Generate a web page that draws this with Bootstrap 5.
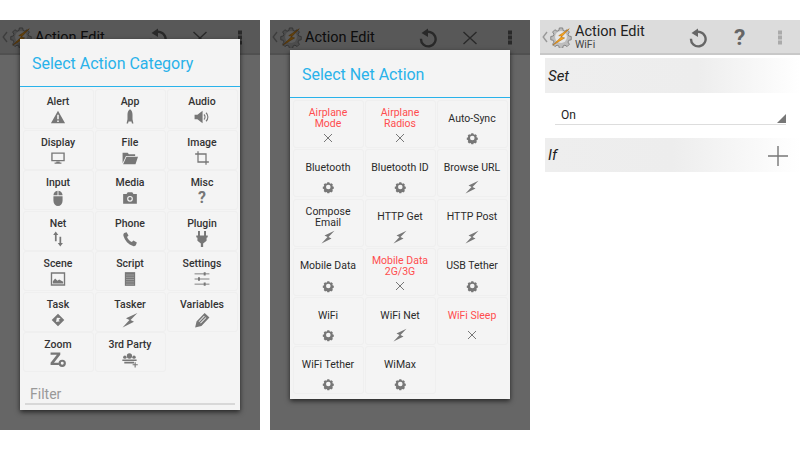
<!DOCTYPE html>
<html lang="en">
<head>
<meta charset="utf-8">
<title>Tasker Action Edit</title>
<link href="https://cdn.jsdelivr.net/npm/bootstrap@5.3.0/dist/css/bootstrap.min.css" rel="stylesheet">
<style>
html,body{background:#fff;margin:0;width:800px;height:450px;overflow:hidden}
body{font-family:Roboto,"Liberation Sans",sans-serif;color:#222}
.stage{padding-top:20px;gap:10px;height:450px}
.phone{width:260px;height:410px;background:#fff;overflow:hidden}
.appbar{height:35px;background:#dcdcdc;border-bottom:2px solid #c8c8c8;padding-left:2px}
.appbar .chev{width:6px;height:12px;margin-right:2px;flex:none}
.appbar .logo{width:22px;height:22px;flex:none}
.apptitle{margin-left:3px;line-height:1;flex:1;padding-top:3px}
.apptitle.two{padding-top:2px}
.apptitle b{display:block;font-weight:400;font-size:14.5px;color:#222}
.apptitle span{display:block;font-size:10.5px;color:#444;margin-top:1px}
.barico{position:absolute;top:8px;color:#666}
.barico svg{display:block;width:20px;height:20px}
.scrim{position:absolute;inset:0;background:rgba(0,0,0,.6)}
.dlg{position:absolute;left:20px;width:220px;background:#f4f4f4;box-shadow:0 2px 5px rgba(0,0,0,.65)}
.dlg1{top:19px;height:371px}
.dlg2{top:30px;height:349px}
.dlgtitle{color:#29b2ea;font-size:16px;height:48px;line-height:50px;padding-left:12px;border-bottom:1.5px solid #29b2ea;letter-spacing:-.03px}
.tiles{display:grid;grid-template-columns:repeat(3,71px);column-gap:1px;padding:2px 2px 0;justify-content:center}
.dlg1 .tiles{grid-auto-rows:40px;row-gap:.5px}
.dlg2 .tiles{grid-auto-rows:48px;row-gap:1.3px}
.tile{border:1px solid #efefef;border-radius:3px;text-align:center;align-items:center}
.dlg1 .tile{font-size:10.5px;font-weight:500;color:#333}
.dlg1 .tlabel{height:13px;line-height:13px;margin-top:5px}
.dlg1 .tico{margin-top:1px;width:16px;height:16px}
.dlg1 .tico svg{width:16px;height:16px}
.dlg2 .tile{font-size:10.5px;color:#2b2b2b}
.dlg2 .tlabel{height:30px;line-height:11px;padding-top:4px;justify-content:center;align-items:center}
.tile.off{color:#ff4d4f!important}
.tico{width:14px;height:14px;color:#777;flex:none}
.tico svg{display:block;width:14px;height:14px}
.filterbox{position:absolute;left:5px;right:5px;bottom:5px;height:24px;border-bottom:2px solid #d8d8d8;padding-left:5px;font-size:14px;line-height:26px;color:#999}
.band{height:35px;margin-left:5px;font-style:italic;font-size:15px;padding-left:3px;color:#222}
.setband{margin-top:3px;padding-top:1px;background:linear-gradient(90deg,#eeeeee,#ededed 60%,#fff)}
.ifband{margin-top:13px;height:34px;padding-top:1px;background:linear-gradient(90deg,#eeeeee,#ededed 50%,#fff)}
.picker{margin:15px 14px 0 15px;height:17px;border-bottom:1.5px solid #ddd;font-size:12px;line-height:15px;padding-left:6px;color:#222}
.caret{position:absolute;right:0;bottom:1px;width:9px;height:9px}
.plus{width:20px;height:20px;margin-right:12px;color:#777}
</style>
</head>
<body>
<svg width="0" height="0" class="position-absolute">
<defs>
<symbol id="logo" viewBox="0 0 24 24">
<path fill="#bdbdbd" stroke="#777" stroke-width="1" d="M10 1h4l.6 3 2.2.9 2.6-1.7 2.800 2.800-1.700 2.600.9 2.200 3 .6v4l-3 .6-.9 2.200 1.700 2.600-2.800 2.800-2.600-1.700-2.200.9-.6 3h-4l-.6-3-2.200-.9-2.600 1.700-2.800-2.800 1.700-2.600-.9-2.200-3-.6v-4l3-.6.9-2.200-1.700-2.600 2.800-2.800 2.600 1.700 2.200-.9z" transform="translate(1.200 1.200) scale(.9)"/>
<circle cx="12" cy="12" r="6.500" fill="#e6e6e6"/>
<path fill="#f5a21c" stroke="#a85f00" stroke-width=".5" d="M21 3 9.500 10.500l3.500.8L3 21l13-8-3.500-1z"/>
</symbol>
<symbol id="chev" viewBox="0 0 6 12"><path d="M5 1 1.200 6 5 11" fill="none" stroke="#999" stroke-width="1.400"/></symbol>
<symbol id="undo" viewBox="0 0 20 20"><path d="M6 5.200A7.300 7.300 0 1 1 3 10.800" fill="none" stroke="currentColor" stroke-width="2.400"/><path d="M10 .5v8.400L3.500 5z" fill="currentColor"/></symbol>
<symbol id="xmk" viewBox="0 0 20 20"><path d="M3.500 4l13 12M16.500 4l-13 12" fill="none" stroke="currentColor" stroke-width="1.400"/></symbol>
<symbol id="dots" viewBox="0 0 20 20"><path d="M8 2.500h4v4H8zM8 7.500h4v4H8zM8 12.500h4v4H8z" fill="currentColor" stroke="none"/></symbol>
<symbol id="gear" viewBox="0 0 14 14"><path fill-rule="evenodd" fill="currentColor" d="M6 2.500h2l.3 1 .9.400 1-.5 1.400 1.400-.5 1 .4.900 1 .3v2l-1 .3-.4.900.5 1-1.400 1.400-1-.5-.9.400-.3 1H6l-.3-1-.9-.4-1 .5-1.400-1.400.5-1-.4-.9-1-.3v-2l1-.3.4-.9-.5-1 1.400-1.400 1 .5.900-.4zM7 4.900a2.300 2.300 0 1 0 0 4.600 2.300 2.300 0 0 0 0-4.600z" transform="translate(.3 -.2)"/></symbol>
<symbol id="bolt" viewBox="0 0 14 14"><path fill="currentColor" d="M13.500.8 3.500 5.500l3 1.500L.5 13.500 10.500 8.500l-3-1.500z"/></symbol>
<symbol id="ex" viewBox="0 0 14 14"><path d="M3 3l8 8M11 3l-8 8" fill="none" stroke="currentColor" stroke-width="1"/></symbol>
<symbol id="warn" viewBox="0 0 14 14"><path fill-rule="evenodd" fill="currentColor" d="M7 1.500 13.200 12.500H.8zM6.300 5v4h1.400V5zM6.300 10v1.300h1.400V10z"/></symbol>
<symbol id="rocket" viewBox="0 0 14 14"><path fill="currentColor" d="M7 .3c1.600 1 2.200 2.700 2.200 4.700v4l.8 3.700H8.700L8.300 11H5.700l-.4 1.700H4l.8-3.700V5C4.800 3 5.400 1.300 7 .3z"/></symbol>
<symbol id="speaker" viewBox="0 0 14 14"><path fill="currentColor" d="M.5 5h2.500L7.500 1.500v11L3 9H.5z"/><path fill="none" stroke="currentColor" d="M8.700 4.800a3 3 0 0 1 0 4.400M10.500 3.300a5 5 0 0 1 0 7.400"/></symbol>
<symbol id="monitor" viewBox="0 0 14 14"><path fill="none" stroke="currentColor" stroke-width="1.200" d="M1.700 2.700h10.600v6.600H1.700z"/><path fill="currentColor" d="M5.500 10h3v1h1.500v1H4v-1h1.500z"/></symbol>
<symbol id="folder" viewBox="0 0 14 14"><path fill="currentColor" d="M.5 2.500h4.500l1 1.200h5.500v1.500H3.500L.5 11.500zM3.900 6H14L11.800 12.500H1z"/></symbol>
<symbol id="crop" viewBox="0 0 14 14"><path fill="none" stroke="currentColor" stroke-width="1.100" d="M3.500 1v9.500H13M1 3.500h9.500V13"/></symbol>
<symbol id="mouse" viewBox="0 0 14 14"><path fill="currentColor" d="M3 5.500h8V9.500a4 4.500 0 0 1-8 0zM3 4.700C3 2.500 4.500.8 6.600.6v4.100zM7.400.6C9.500.8 11 2.500 11 4.700H7.400z"/></symbol>
<symbol id="camera" viewBox="0 0 14 14"><path fill-rule="evenodd" fill="currentColor" d="M1 3.500h3L5 2h4l1 1.500h3V12H1zM7 5.200a2.500 2.500 0 1 0 0 5 2.500 2.500 0 0 0 0-5z"/><circle cx="7" cy="7.700" r="1.500" fill="currentColor"/></symbol>
<symbol id="arrows" viewBox="0 0 14 14"><path fill="currentColor" d="M5 .5 7.300 3.500H5.800V9H4.300V3.500H2.800zM9 13.500 6.800 10.500h1.500V5h1.500v5.500h1.500z"/></symbol>
<symbol id="phone" viewBox="0 0 14 14"><path fill="currentColor" d="M2 1.800 4 1l1.700 3-1.300 1.200c.6 1.600 2.500 3.700 4.200 4.400L10 8.300l3 1.800-.8 2.200c-.4.900-1.500 1.200-2.500.8C5.500 11.500 2.500 8.500 1.300 4.300c-.3-1 0-2 .7-2.500z"/></symbol>
<symbol id="plug" viewBox="0 0 14 14"><path fill="currentColor" d="M3.500 0h1.700v4h3.600V0h1.700v4H12v1.500l-1 .5v2.500L8 11v3H6v-3L3 8.500V6L2 5.500V4h1.500z"/></symbol>
<symbol id="picture" viewBox="0 0 14 14"><path fill="none" stroke="currentColor" stroke-width="1.200" d="M1.300 1.800h11.400v10.400H1.300z"/><path fill="currentColor" d="M2.500 11V9l2-2.500 2 2 1.500-1 3.500 2V11z"/></symbol>
<symbol id="script" viewBox="0 0 14 14"><path fill="currentColor" d="M2.500 1h9v12h-9z"/><path stroke="#bbb" stroke-width=".5" d="M3.500 3.500h7M3.500 5.500h7M3.500 7.500h7M3.500 9.500h7M3.500 11.500h7"/></symbol>
<symbol id="sliders" viewBox="0 0 14 14"><path stroke="currentColor" stroke-width=".8" d="M.5 2.500h13M.5 7h13M.5 11.500h13"/><path fill="currentColor" d="M8.500 1h1.700v3H8.500zM3.500 5.500h1.700v3H3.500zM8.500 10h1.700v3H8.500z"/></symbol>
<symbol id="diamond" viewBox="0 0 14 14"><path fill-rule="evenodd" fill="currentColor" d="M7 1.500 12.500 7 7 12.500 1.500 7zM6 5 5.300 8.700 8.700 8 7.500 7 9.300 5.300z"/></symbol>
<symbol id="pencil" viewBox="0 0 14 14"><path fill="currentColor" d="M9.300.8 13.500 4.800l-7 7.400L1 13.500l1.200-5.200zM8.800 3.300 4 8.300l.5.500 4.900-5zM10.300 4.500l-4.900 5 .5.500 4.900-5z"/></symbol>
<symbol id="zgear" viewBox="0 0 14 14"><path fill="currentColor" d="M.5.500h8.500v1.900L3.500 9.300H7.800v2H.5V9.400L6 2.500H.5z"/><path fill-rule="evenodd" fill="currentColor" d="M10.700 6.700a3.200 3.200 0 1 0 0 6.400 3.200 3.200 0 0 0 0-6.400zm0 1.900a1.300 1.300 0 1 1 0 2.600 1.300 1.300 0 0 1 0-2.600z"/></symbol>
<symbol id="people" viewBox="0 0 14 14"><circle cx="6.500" cy="3.500" r="2.300" fill="currentColor"/><circle cx="2.500" cy="4.500" r="1.500" fill="currentColor"/><circle cx="10.500" cy="4.500" r="1.500" fill="currentColor"/><path fill="currentColor" d="M.3 6.500h12.500v1.300H.3zM2 8.500h8.500v1.500H2z"/><path stroke="currentColor" d="M11.500 9v4.500M9.300 11.200h4.500"/></symbol>
<symbol id="plusm" viewBox="0 0 20 20"><path d="M10 0v20M0 10h20" stroke="currentColor" stroke-width="1.400" fill="none"/></symbol>
</defs>
</svg>

<div class="stage d-flex">

  <div class="phone position-relative">
    <div class="appbar d-flex align-items-center">
      <svg class="chev"><use href="#chev"/></svg><svg class="logo"><use href="#logo"/></svg>
      <div class="apptitle"><b>Action Edit</b></div>
      <span class="barico" style="left:148px"><svg><use href="#undo"/></svg></span>
      <span class="barico" style="left:190px"><svg><use href="#xmk"/></svg></span>
      <span class="barico" style="left:230px"><svg><use href="#dots"/></svg></span>
    </div>
    <div class="scrim"></div>
    <div class="dlg dlg1">
      <div class="dlgtitle">Select Action Category</div>
      <div class="tiles">
        <div class="tile d-flex flex-column"><div class="tlabel">Alert</div><div class="tico"><svg><use href="#warn"/></svg></div></div>
        <div class="tile d-flex flex-column"><div class="tlabel">App</div><div class="tico"><svg><use href="#rocket"/></svg></div></div>
        <div class="tile d-flex flex-column"><div class="tlabel">Audio</div><div class="tico"><svg><use href="#speaker"/></svg></div></div>
        <div class="tile d-flex flex-column"><div class="tlabel">Display</div><div class="tico"><svg><use href="#monitor"/></svg></div></div>
        <div class="tile d-flex flex-column"><div class="tlabel">File</div><div class="tico"><svg><use href="#folder"/></svg></div></div>
        <div class="tile d-flex flex-column"><div class="tlabel">Image</div><div class="tico"><svg><use href="#crop"/></svg></div></div>
        <div class="tile d-flex flex-column"><div class="tlabel">Input</div><div class="tico"><svg><use href="#mouse"/></svg></div></div>
        <div class="tile d-flex flex-column"><div class="tlabel">Media</div><div class="tico"><svg><use href="#camera"/></svg></div></div>
        <div class="tile d-flex flex-column"><div class="tlabel">Misc</div><div class="tico fw-bold lh-1 fs-6 text-center">?</div></div>
        <div class="tile d-flex flex-column"><div class="tlabel">Net</div><div class="tico"><svg><use href="#arrows"/></svg></div></div>
        <div class="tile d-flex flex-column"><div class="tlabel">Phone</div><div class="tico"><svg><use href="#phone"/></svg></div></div>
        <div class="tile d-flex flex-column"><div class="tlabel">Plugin</div><div class="tico"><svg><use href="#plug"/></svg></div></div>
        <div class="tile d-flex flex-column"><div class="tlabel">Scene</div><div class="tico"><svg><use href="#picture"/></svg></div></div>
        <div class="tile d-flex flex-column"><div class="tlabel">Script</div><div class="tico"><svg><use href="#script"/></svg></div></div>
        <div class="tile d-flex flex-column"><div class="tlabel">Settings</div><div class="tico"><svg><use href="#sliders"/></svg></div></div>
        <div class="tile d-flex flex-column"><div class="tlabel">Task</div><div class="tico"><svg><use href="#diamond"/></svg></div></div>
        <div class="tile d-flex flex-column"><div class="tlabel">Tasker</div><div class="tico"><svg><use href="#bolt"/></svg></div></div>
        <div class="tile d-flex flex-column"><div class="tlabel">Variables</div><div class="tico"><svg><use href="#pencil"/></svg></div></div>
        <div class="tile d-flex flex-column"><div class="tlabel">Zoom</div><div class="tico"><svg><use href="#zgear"/></svg></div></div>
        <div class="tile d-flex flex-column"><div class="tlabel">3rd Party</div><div class="tico"><svg><use href="#people"/></svg></div></div>
      </div>
      <div class="filterbox">Filter</div>
    </div>
  </div>

  <div class="phone position-relative">
    <div class="appbar d-flex align-items-center">
      <svg class="chev"><use href="#chev"/></svg><svg class="logo"><use href="#logo"/></svg>
      <div class="apptitle"><b>Action Edit</b></div>
      <span class="barico" style="left:148px"><svg><use href="#undo"/></svg></span>
      <span class="barico" style="left:190px"><svg><use href="#xmk"/></svg></span>
      <span class="barico" style="left:230px"><svg><use href="#dots"/></svg></span>
    </div>
    <div class="scrim"></div>
    <div class="dlg dlg2">
      <div class="dlgtitle">Select Net Action</div>
      <div class="tiles">
        <div class="tile off d-flex flex-column"><div class="tlabel d-flex">Airplane<br>Mode</div><div class="tico"><svg><use href="#ex"/></svg></div></div>
        <div class="tile off d-flex flex-column"><div class="tlabel d-flex">Airplane<br>Radios</div><div class="tico"><svg><use href="#ex"/></svg></div></div>
        <div class="tile d-flex flex-column"><div class="tlabel d-flex">Auto-Sync</div><div class="tico"><svg><use href="#gear"/></svg></div></div>
        <div class="tile d-flex flex-column"><div class="tlabel d-flex">Bluetooth</div><div class="tico"><svg><use href="#gear"/></svg></div></div>
        <div class="tile d-flex flex-column"><div class="tlabel d-flex">Bluetooth ID</div><div class="tico"><svg><use href="#gear"/></svg></div></div>
        <div class="tile d-flex flex-column"><div class="tlabel d-flex">Browse URL</div><div class="tico"><svg><use href="#bolt"/></svg></div></div>
        <div class="tile d-flex flex-column"><div class="tlabel d-flex">Compose<br>Email</div><div class="tico"><svg><use href="#bolt"/></svg></div></div>
        <div class="tile d-flex flex-column"><div class="tlabel d-flex">HTTP Get</div><div class="tico"><svg><use href="#bolt"/></svg></div></div>
        <div class="tile d-flex flex-column"><div class="tlabel d-flex">HTTP Post</div><div class="tico"><svg><use href="#bolt"/></svg></div></div>
        <div class="tile d-flex flex-column"><div class="tlabel d-flex">Mobile Data</div><div class="tico"><svg><use href="#gear"/></svg></div></div>
        <div class="tile off d-flex flex-column"><div class="tlabel d-flex">Mobile Data<br>2G/3G</div><div class="tico"><svg><use href="#ex"/></svg></div></div>
        <div class="tile d-flex flex-column"><div class="tlabel d-flex">USB Tether</div><div class="tico"><svg><use href="#gear"/></svg></div></div>
        <div class="tile d-flex flex-column"><div class="tlabel d-flex">WiFi</div><div class="tico"><svg><use href="#gear"/></svg></div></div>
        <div class="tile d-flex flex-column"><div class="tlabel d-flex">WiFi Net</div><div class="tico"><svg><use href="#bolt"/></svg></div></div>
        <div class="tile off d-flex flex-column"><div class="tlabel d-flex">WiFi Sleep</div><div class="tico"><svg><use href="#ex"/></svg></div></div>
        <div class="tile d-flex flex-column"><div class="tlabel d-flex">WiFi Tether</div><div class="tico"><svg><use href="#gear"/></svg></div></div>
        <div class="tile d-flex flex-column"><div class="tlabel d-flex">WiMax</div><div class="tico"><svg><use href="#gear"/></svg></div></div>
      </div>
    </div>
  </div>

  <div class="phone position-relative">
    <div class="appbar d-flex align-items-center">
      <svg class="chev"><use href="#chev"/></svg><svg class="logo"><use href="#logo"/></svg>
      <div class="apptitle two"><b>Action Edit</b><span>WiFi</span></div>
      <span class="barico" style="left:148px"><svg><use href="#undo"/></svg></span>
      <span class="barico fw-bold fs-4 lh-1 text-center" style="left:194px;top:7px">?</span>
      <span class="barico" style="left:230px;color:#aaa"><svg><use href="#dots"/></svg></span>
    </div>
    <div class="band setband d-flex align-items-center">Set</div>
    <div class="picker position-relative">On<svg class="caret" viewBox="0 0 9 9"><path d="M9 0v9H0z" fill="#777"/></svg></div>
    <div class="band ifband d-flex align-items-center justify-content-between">If<svg class="plus"><use href="#plusm"/></svg></div>
  </div>

</div>
<script src="https://cdn.jsdelivr.net/npm/bootstrap@5.3.0/dist/js/bootstrap.bundle.min.js"></script>
</body>
</html>
